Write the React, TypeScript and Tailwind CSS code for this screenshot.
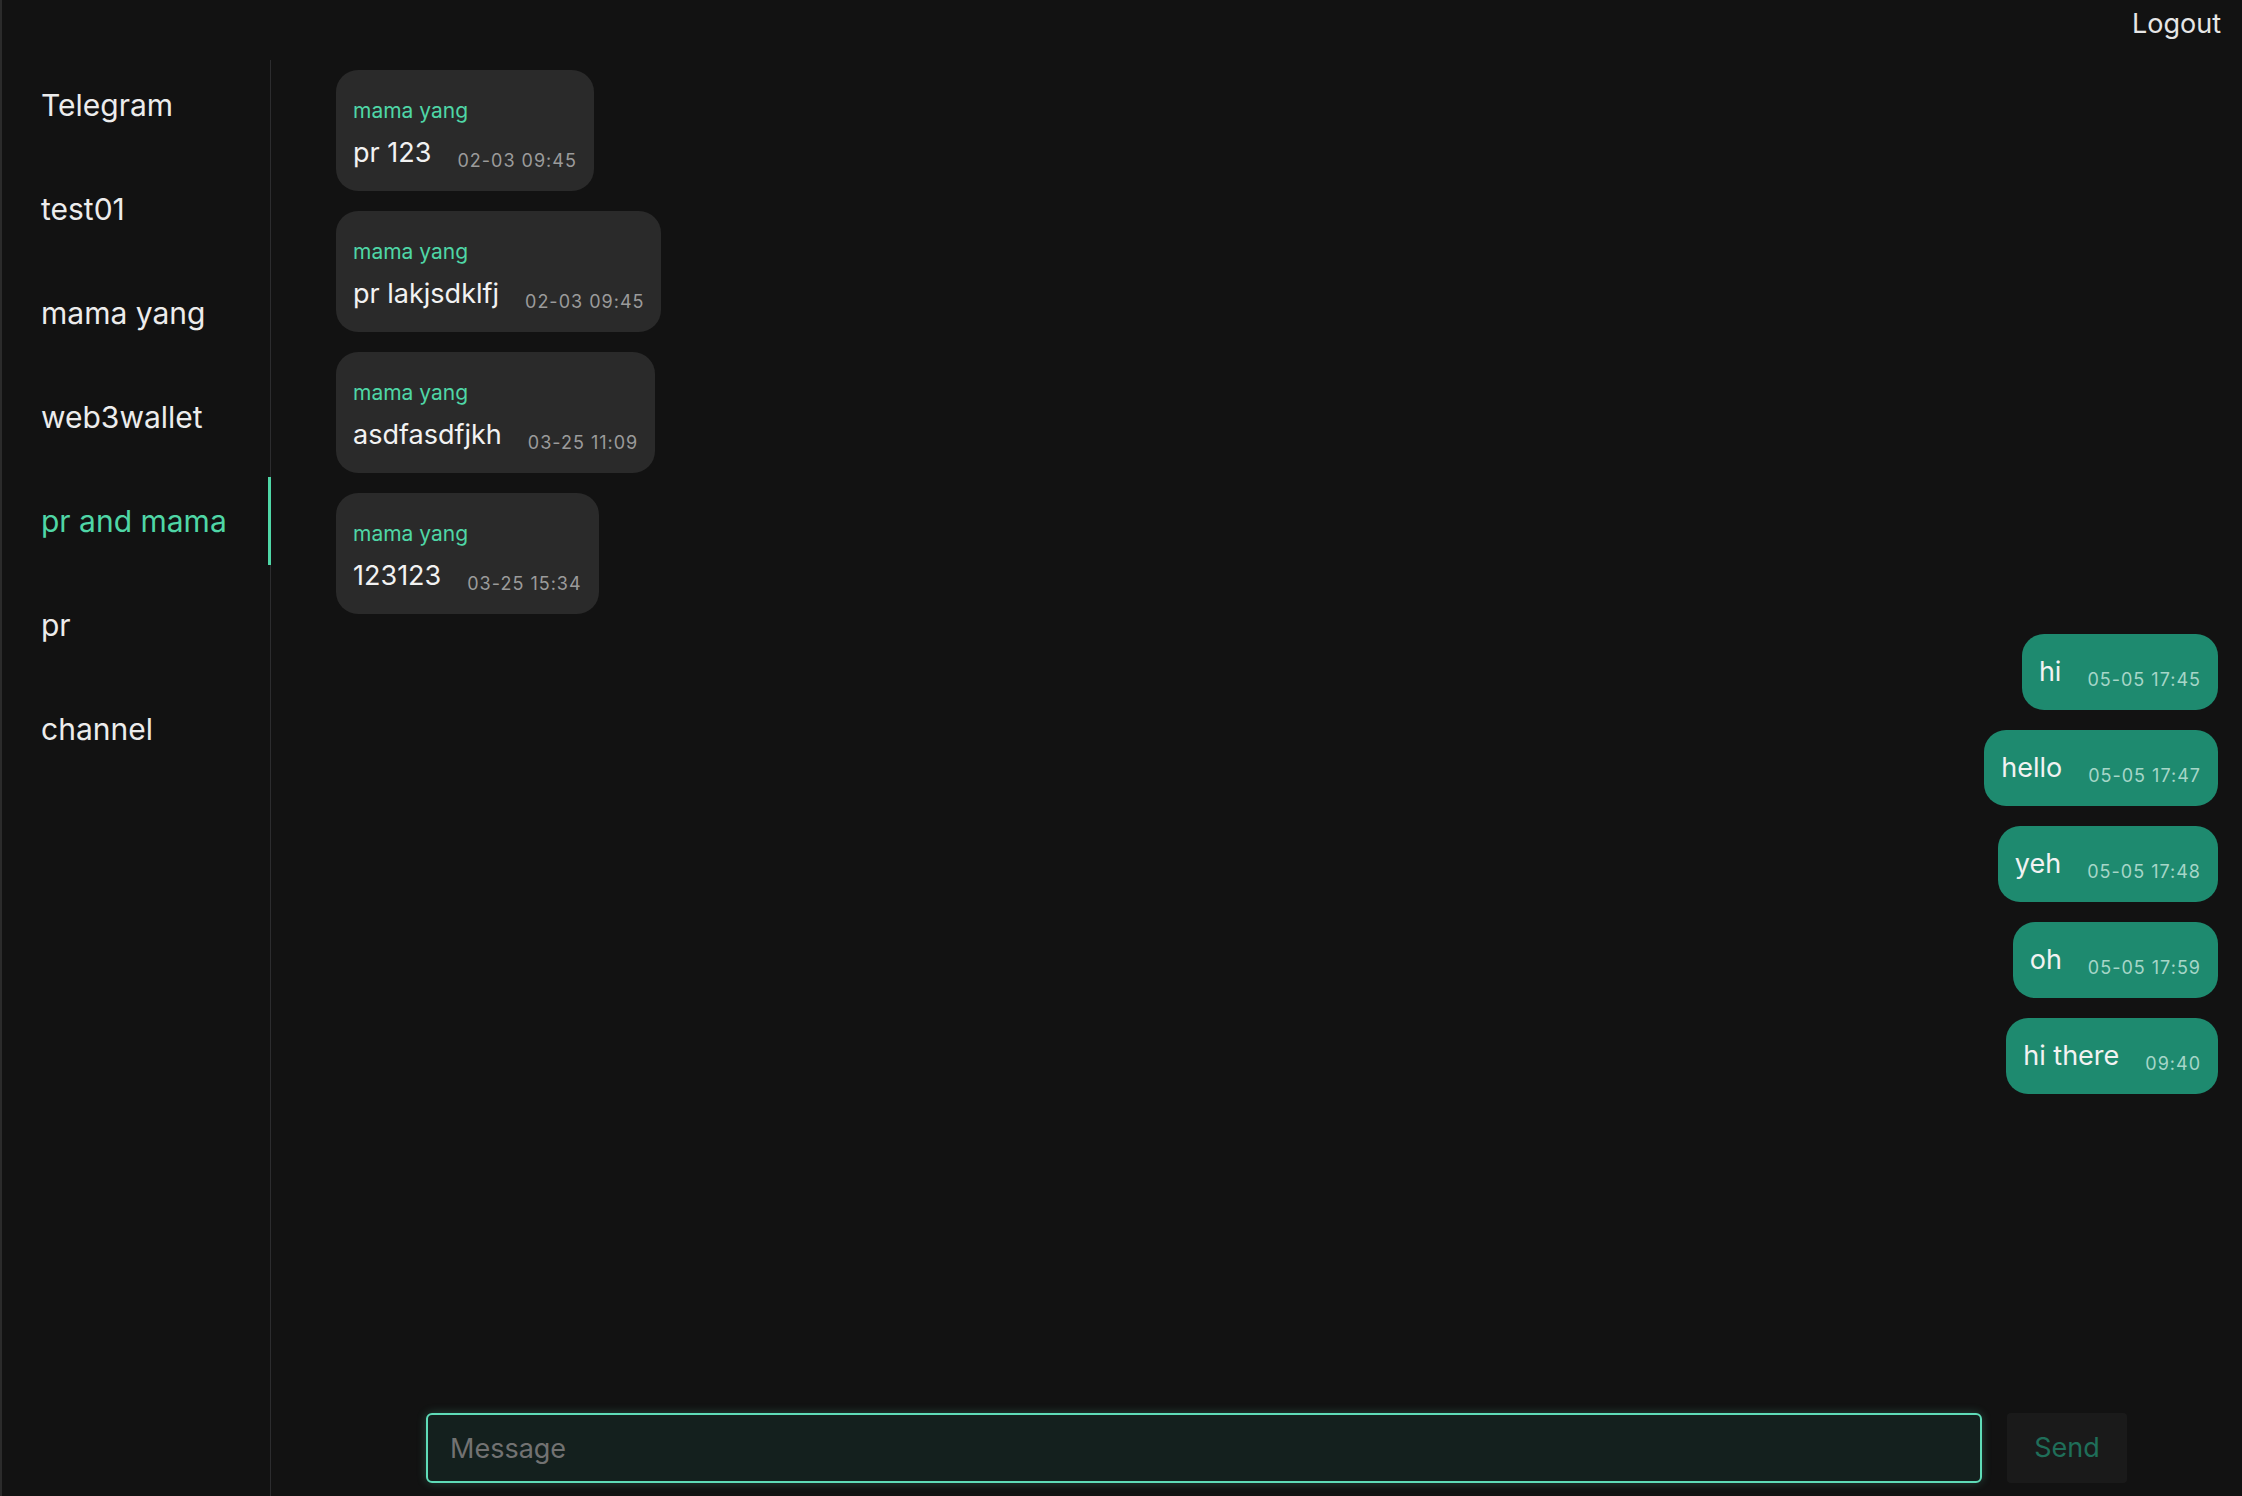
import React from "react";

const CHATS = ["Telegram", "test01", "mama yang", "web3wallet", "pr and mama", "pr", "channel"];
const ACTIVE = "pr and mama";

type Msg = { id: number; mine: boolean; from?: string; text: string; time: string };

const MESSAGES: Msg[] = [
  { id: 1, mine: false, from: "mama yang", text: "pr 123", time: "02-03 09:45" },
  { id: 2, mine: false, from: "mama yang", text: "pr lakjsdklfj", time: "02-03 09:45" },
  { id: 3, mine: false, from: "mama yang", text: "asdfasdfjkh", time: "03-25 11:09" },
  { id: 4, mine: false, from: "mama yang", text: "123123", time: "03-25 15:34" },
  { id: 5, mine: true, text: "hi", time: "05-05 17:45" },
  { id: 6, mine: true, text: "hello", time: "05-05 17:47" },
  { id: 7, mine: true, text: "yeh", time: "05-05 17:48" },
  { id: 8, mine: true, text: "oh", time: "05-05 17:59" },
  { id: 9, mine: true, text: "hi there", time: "09:40" },
];

const Bubble: React.FC<{ msg: Msg }> = ({ msg }) => {
  if (msg.mine) {
    return (
      <div className="self-end rounded-[22px] bg-[#1e8a6f] px-[17px] pt-[18px] pb-[18px]">
        <div className="flex items-end gap-[26px]">
          <span className="text-[27px] leading-[40px] text-[#f2f2f2]">{msg.text}</span>
          <span className="text-[18px] leading-[24px] tracking-[1px] text-[#a6d6c8]">{msg.time}</span>
        </div>
      </div>
    );
  }
  return (
    <div className="self-start rounded-[22px] bg-[#2a2a2a] px-[17px] pt-[26px] pb-[18px]">
      <div className="text-[21px] leading-[30px] text-[#4fd6a6]">{msg.from}</div>
      <div className="mt-[7px] flex items-end gap-[26px]">
        <span className="text-[27px] leading-[40px] text-[#f2f2f2]">{msg.text}</span>
        <span className="text-[18px] leading-[24px] tracking-[1px] text-[#9b9b9b]">{msg.time}</span>
      </div>
    </div>
  );
};

export default function App() {
  return (
    <div
      className="flex h-screen w-full flex-col overflow-hidden border-l-2 border-[#2b2b2b] bg-[#121212] text-[#ececec]"
      style={{ fontFamily: "Inter, 'Noto Sans', sans-serif" }}
    >
      {/* top bar */}
      <header className="flex h-[60px] shrink-0 items-start justify-end pr-[21px]">
        <button className="mt-[4px] text-[27px] leading-[40px] text-[#e6e6e6]">Logout</button>
      </header>

      <div className="flex min-h-0 flex-1">
        {/* chat list */}
        <nav className="flex w-[269px] shrink-0 flex-col gap-[16px] border-r border-[#2c2c2e] pt-px">
          {CHATS.map((name) => {
            const active = name === ACTIVE;
            return (
              <div
                key={name}
                className={
                  active
                    ? "-mr-px flex h-[88px] items-center border-r-[3px] border-[#4fd6a6] pl-[39px] text-[30px] leading-[42px] text-[#4fd6a6]"
                    : "flex h-[88px] items-center pl-[39px] text-[30px] leading-[42px] text-[#ececec]"
                }
              >
                {name}
              </div>
            );
          })}
        </nav>

        {/* conversation */}
        <main className="flex min-w-0 flex-1 flex-col">
          <div className="flex min-h-0 flex-1 flex-col gap-[20px] pt-[10px] pl-[65px] pr-[24px]">
            {MESSAGES.map((m) => (
              <Bubble key={m.id} msg={m} />
            ))}
          </div>

          <div className="flex shrink-0 items-center gap-[25px] pl-[155px] pr-[115px] pb-[13px]">
            <input
              placeholder="Message"
              className="h-[70px] flex-1 rounded-[6px] border-2 border-[#5fdcb8] bg-[#14201e] px-[22px] text-[27px] text-[#e6e6e6] shadow-[0_0_10px_rgba(95,220,184,0.25)] outline-none placeholder:text-[#727272]"
            />
            <button className="h-[70px] w-[120px] rounded-[4px] bg-[#1a1a1a] text-[27px] text-[#1f6e59]">
              Send
            </button>
          </div>
        </main>
      </div>
    </div>
  );
}
